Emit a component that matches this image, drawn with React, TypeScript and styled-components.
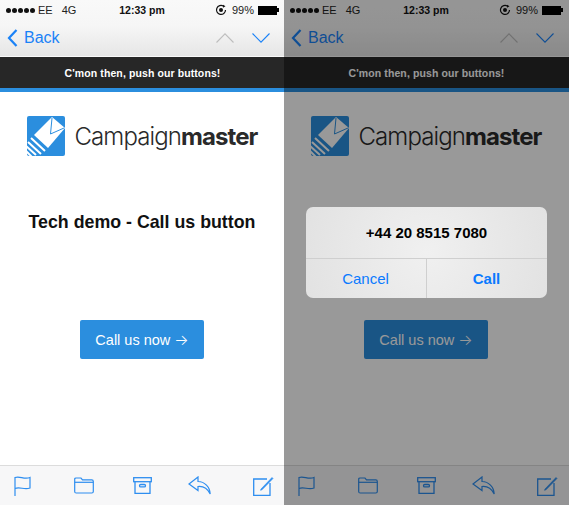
import React from 'react';
import styled, { createGlobalStyle } from 'styled-components';

const GlobalStyle = createGlobalStyle`
  html, body { margin: 0; padding: 0; background: #fff; }
  body { font-family: "Liberation Sans", Arial, sans-serif; }
`;

const Page = styled.div`
  display: flex;
  width: 569px;
  height: 505px;
  overflow: hidden;
`;

const Phone = styled.div`
  position: relative;
  display: flex;
  flex-direction: column;
  width: 285px;
  height: 505px;
  flex: none;
  background: #fff;
  & + & {
    margin-left: -1px;
  }
`;

const Header = styled.div`
  height: 56px;
  flex: none;
  background: linear-gradient(#f9f9f9 0%, #f6f6f6 45%, #e6e6e6 100%);
  border-bottom: 1px solid #fafafa;
  padding: 0 7px 0 6px;
`;

const StatusBar = styled.div`
  display: grid;
  grid-template-columns: 1fr auto 1fr;
  align-items: center;
  height: 18px;
  padding-top: 1px;
  margin-right: -3px;
  font-size: 11px;
  color: #222;
`;

const StatusLeft = styled.div`
  display: flex;
  align-items: center;
  gap: 3px;
`;

const Dots = styled.div`
  display: flex;
  gap: 1px;
`;

const Dot = styled.span`
  width: 5px;
  height: 5px;
  border-radius: 50%;
  background: #111;
`;

const Carrier = styled.span`
  margin-right: 6px;
`;

const Clock = styled.div`
  font-weight: 700;
  font-size: 10.5px;
  color: #111;
  margin-right: 3px;
`;

const StatusRight = styled.div`
  display: flex;
  align-items: center;
  justify-content: flex-end;
  gap: 5px;
`;

const Battery = styled.div`
  position: relative;
  width: 17px;
  height: 7px;
  background: #000;
  border: 1px solid #000;
  margin: 0 4px 0 -1px;
  &::after {
    content: '';
    position: absolute;
    right: -3px;
    top: 1px;
    width: 2px;
    height: 4px;
    background: #000;
  }
`;

const NavBar = styled.div`
  display: flex;
  align-items: center;
  height: 37px;
  padding-left: 1px;
`;

const BackLink = styled.div`
  display: flex;
  align-items: center;
  gap: 6px;
  font-size: 16px;
  color: #1a82f7;
  flex: 1;
`;

const NavArrows = styled.div`
  display: flex;
  align-items: center;
  gap: 18px;
  padding-right: 8px;
`;

const Banner = styled.div`
  flex: none;
  height: 31px;
  background: #272727;
  color: #fff;
  font-size: 10.5px;
  font-weight: 700;
  letter-spacing: 0.1px;
  display: flex;
  align-items: center;
  justify-content: center;
  border-bottom: 4px solid #2b8ede;
`;

const Content = styled.div`
  flex: 1;
  display: flex;
  flex-direction: column;
  align-items: center;
  padding-right: 1px;
`;

const Logo = styled.div`
  display: flex;
  align-items: center;
  gap: 10px;
  margin-top: 24px;
  height: 40px;
`;

const Wordmark = styled.div`
  font-family: Inter, "Liberation Sans", sans-serif;
  font-size: 24px;
  font-weight: 300;
  letter-spacing: -0.9px;
  color: #2a2a2a;
  b {
    font-weight: 700;
  }
`;

const Title = styled.h1<{ $covered?: boolean }>`
  margin: 55px 0 0;
  font-size: 17.8px;
  line-height: 22px;
  font-weight: 700;
  color: #111;
  visibility: ${props => (props.$covered ? 'hidden' : 'visible')};
`;

const CallButton = styled.div`
  margin-top: 87px;
  width: 124px;
  height: 39px;
  border-radius: 2px;
  background: #2b8ede;
  color: #fff;
  font-size: 14.5px;
  display: flex;
  align-items: center;
  justify-content: center;
  gap: 4px;
`;

const ButtonArrow = styled.span`
  font-family: Inter, sans-serif;
  font-size: 15px;
  font-weight: 300;
  line-height: 1;
`;

const Toolbar = styled.div`
  flex: none;
  height: 39px;
  background: #f7f7f8;
  border-top: 1px solid #dcdcdc;
  display: grid;
  grid-template-columns: 44px 80px 36px 78px 51px;
  justify-items: center;
  align-items: center;
`;

const Dimmer = styled.div`
  position: absolute;
  inset: 0;
  background: rgba(0, 0, 0, 0.4);
`;

const Alert = styled.div`
  position: absolute;
  left: 22px;
  top: 207px;
  width: 241px;
  height: 91px;
  border-radius: 7px;
  background: radial-gradient(circle at 50% 50%, #f0f0f0, #e2e2e2);
  display: flex;
  flex-direction: column;
`;

const AlertMessage = styled.div`
  height: 51px;
  display: flex;
  align-items: center;
  justify-content: center;
  font-size: 15px;
  font-weight: 700;
  color: #000;
  border-bottom: 1px solid #cfcfcf;
`;

const AlertActions = styled.div`
  flex: 1;
  display: grid;
  grid-template-columns: 120px 1fr;
`;

const AlertAction = styled.div<{ $primary?: boolean }>`
  display: flex;
  align-items: center;
  justify-content: center;
  font-size: 15px;
  color: #0a7aff;
  padding-right: 1px;
  font-weight: ${props => (props.$primary ? 700 : 400)};
  & + & {
    border-left: 1px solid #cfcfcf;
  }
`;

const CampaignIcon = () => (
  <svg width="38" height="40" viewBox="0 0 38 40">
    <clipPath id="logo-square">
      <rect width="38" height="40" rx="2" />
    </clipPath>
    <g clipPath="url(#logo-square)">
      <rect width="38" height="40" fill="#2b8ede" />
      <path d="M7 19 L25 1 L38 12 L21 32 Z" fill="#fff" />
      <path d="M25 2 L23.5 18 L37 12" fill="none" stroke="#2b8ede" strokeWidth="1" />
      <path
        d="M4 22 L18 35 M1 26 L14 38 M-1 30 L9 39 M-1 35 L5 41"
        fill="none"
        stroke="#fff"
        strokeWidth="2"
      />
    </g>
  </svg>
);

const Flag = () => (
  <svg width="17" height="20" viewBox="0 0 17 20" fill="none" stroke="#2e8ef0" strokeWidth="1.2">
    <path d="M1 20 V1.5 C6 -0.5 10 4 16 1.5 V12 C10 14.5 6 10 1 12.5" />
  </svg>
);

const Folder = () => (
  <svg width="20" height="17" viewBox="0 0 20 17" fill="none" stroke="#2e8ef0" strokeWidth="1.2">
    <path d="M0.7 4 V2 Q0.7 1 2 1 H7 L8.5 2.8 H17.8 Q19.3 2.8 19.3 4.5 V14.5 Q19.3 16 17.8 16 H2.2 Q0.7 16 0.7 14.5 Z" />
    <path d="M0.7 5.3 H19.3" />
  </svg>
);

const Archive = () => (
  <svg width="19" height="17" viewBox="0 0 19 17" fill="none" stroke="#2e8ef0" strokeWidth="1.3">
    <rect x="0.7" y="0.7" width="17.6" height="4" />
    <path d="M2 4.7 V16.3 H17 V4.7" />
    <rect x="6.5" y="7.5" width="6" height="2.4" rx="1.2" />
  </svg>
);

const Reply = () => (
  <svg width="23" height="19" viewBox="0 0 23 19" fill="none" stroke="#2e8ef0" strokeWidth="1.2">
    <path d="M10 1 L1 8 L10 14.5 V10.5 C15 10 19.5 12.5 22.2 18 C22 11 16.5 5.5 10 5.5 Z" />
  </svg>
);

const Compose = () => (
  <svg width="21" height="21" viewBox="0 0 21 21" fill="none" stroke="#2e8ef0" strokeWidth="1.3">
    <path d="M14 4 H0.7 V20.3 H17 V8" />
    <path d="M8 14 L19 2.5 L20 3.5 L9 14.8 L7.5 15.3 Z" fill="#2e8ef0" strokeWidth="0.6" />
  </svg>
);

const PhoneScreen = ({ titleCovered }: { titleCovered?: boolean }) => (
  <>
    <Header>
      <StatusBar>
        <StatusLeft>
          <Dots>
            {[0, 1, 2, 3, 4].map(i => <Dot key={i} />)}
          </Dots>
          <Carrier>EE</Carrier>
          <span>4G</span>
        </StatusLeft>
        <Clock>12:33 pm</Clock>
        <StatusRight>
          <svg width="12" height="12" viewBox="0 0 12 12" fill="none" stroke="#111" strokeWidth="1.2">
            <path d="M10.5 6 A4.5 4.5 0 1 1 8.5 2.2" />
            <circle cx="6" cy="6" r="2" fill="#111" stroke="none" />
            <path d="M8 0.8 L10.5 2.3 L8 3.8 Z" fill="#111" stroke="none" />
          </svg>
          <span>99%</span>
          <Battery />
        </StatusRight>
      </StatusBar>
      <NavBar>
        <BackLink>
          <svg width="11" height="18" viewBox="0 0 11 18" fill="none" stroke="#1a82f7" strokeWidth="2.2">
            <path d="M9.5 1 L2 9 L9.5 17" />
          </svg>
          Back
        </BackLink>
        <NavArrows>
          <svg width="18" height="10" viewBox="0 0 18 10" fill="none" stroke="#bdbdbd" strokeWidth="1.1">
            <path d="M0.5 9.5 L9 0.8 L17.5 9.5" />
          </svg>
          <svg width="18" height="10" viewBox="0 0 18 10" fill="none" stroke="#1a82f7" strokeWidth="1.1">
            <path d="M0.5 0.5 L9 9.2 L17.5 0.5" />
          </svg>
        </NavArrows>
      </NavBar>
    </Header>
    <Banner>C'mon then, push our buttons!</Banner>
    <Content>
      <Logo>
        <CampaignIcon />
        <Wordmark>Campaign<b>master</b></Wordmark>
      </Logo>
      <Title $covered={titleCovered}>Tech demo - Call us button</Title>
      <CallButton>Call us now <ButtonArrow>→</ButtonArrow></CallButton>
    </Content>
    <Toolbar>
      <Flag />
      <Folder />
      <Archive />
      <Reply />
      <Compose />
    </Toolbar>
  </>
);

const App = () => (
  <Page>
    <GlobalStyle />
    <Phone>
      <PhoneScreen />
    </Phone>
    <Phone>
      <PhoneScreen titleCovered />
      <Dimmer />
      <Alert>
        <AlertMessage>+44 20 8515 7080</AlertMessage>
        <AlertActions>
          <AlertAction>Cancel</AlertAction>
          <AlertAction $primary>Call</AlertAction>
        </AlertActions>
      </Alert>
    </Phone>
  </Page>
);

export default App;
